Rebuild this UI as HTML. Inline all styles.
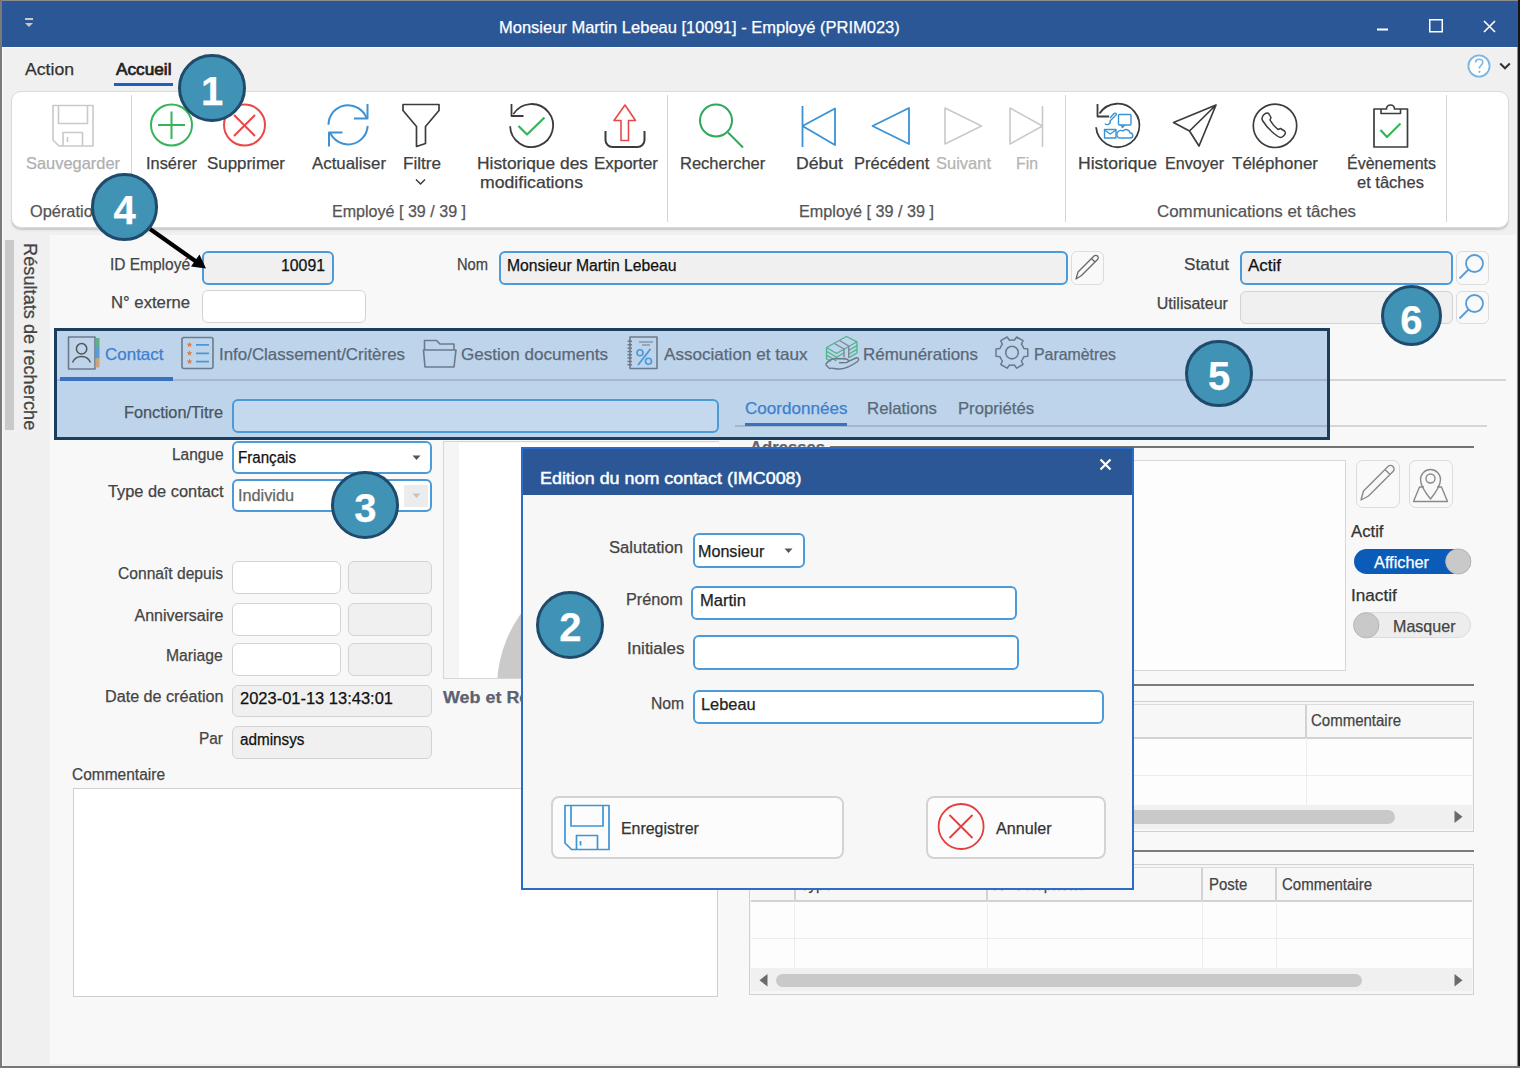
<!DOCTYPE html>
<html><head><meta charset="utf-8">
<style>
*{margin:0;padding:0;box-sizing:border-box}
html,body{width:1520px;height:1068px;overflow:hidden;background:#f0f0f0}
body{position:relative;font-family:"Liberation Sans",sans-serif;color:#3c3c3c}
.a{position:absolute}
.t{position:absolute;white-space:nowrap;line-height:1;-webkit-text-stroke-width:0.25px}
svg{position:absolute;overflow:visible}
</style></head><body>

<div class="a" style="left:0px;top:0px;width:1520px;height:1068px;background:#8c8c8c"></div>
<div class="a" style="left:2px;top:1px;width:1515px;height:1065px;background:#f0f0f0"></div>
<div class="a" style="left:2px;top:1px;width:1516px;height:46px;background:#2b5797"></div>
<div class="a" style="left:2px;top:47px;width:1515px;height:1px;background:#fafafa"></div>
<div class="t" style="left:499.00px;top:19.03px;font-size:16.5px;color:#fff;">Monsieur Martin Lebeau [10091] - Employé (PRIM023)</div>
<svg style="left:0;top:0" width="1520" height="1068" viewBox="0 0 1520 1068">
<rect x="1377" y="28.5" width="11" height="2" fill="#fff"/>
<rect x="1429.75" y="19.75" width="12.5" height="12" fill="none" stroke="#fff" stroke-width="1.5"/>
<path d="M1484 21L1495 32M1495 21L1484 32" stroke="#fff" stroke-width="1.6"/>
<rect x="25" y="18" width="8" height="2" fill="#c9c9c9"/>
<path d="M25 23L33 23L29 27Z" fill="#c9c9c9"/>
</svg>
<div class="t" style="left:25.00px;top:61.33px;font-size:16.5px;color:#333;transform:scaleX(1.0685);transform-origin:0 0;">Action</div>
<div class="t" style="left:116.00px;top:61.33px;font-size:16.5px;color:#222;transform:scaleX(1.0434);transform-origin:0 0;-webkit-text-stroke:0.7px #222;">Accueil</div>
<div class="a" style="left:114px;top:83px;width:59px;height:2.5px;background:#1b5fc6"></div>
<svg style="left:0;top:0" width="1520" height="1068" viewBox="0 0 1520 1068">
<circle cx="1479" cy="66" r="10.6" fill="#fff" stroke="#7ab6e2" stroke-width="1.8"/>
<path d="M1475.6 62.6C1475.6 60.4 1477.2 59.2 1479.2 59.2C1481.4 59.2 1482.8 60.6 1482.8 62.4C1482.8 64.8 1479.4 65.4 1479.4 68.6" fill="none" stroke="#7ab6e2" stroke-width="1.6"/>
<circle cx="1479.4" cy="71.8" r="1.1" fill="#7ab6e2"/>
<path d="M1500.2 63.5L1505 68.3L1509.8 63.5" fill="none" stroke="#333" stroke-width="2"/>
</svg>
<div class="a" style="left:11px;top:91px;width:1498px;height:137px;background:#fff;border:1px solid #dadada;border-radius:10px;box-shadow:0 2px 0 rgba(0,0,0,0.09),0 3px 2px rgba(0,0,0,0.05)"></div>
<div class="a" style="left:131px;top:95px;width:1px;height:127px;background:#d4d4d4"></div>
<div class="a" style="left:667px;top:95px;width:1px;height:127px;background:#d4d4d4"></div>
<div class="a" style="left:1065px;top:95px;width:1px;height:127px;background:#d4d4d4"></div>
<div class="a" style="left:1446px;top:95px;width:1px;height:127px;background:#d4d4d4"></div>
<svg style="left:0;top:0" width="1520" height="1068" viewBox="0 0 1520 1068">
<g fill="none" stroke-width="1.6" stroke-linejoin="round">
<path d="M53 105.5H93V146H59L53 140Z M58.5 105.5V123.5H87.5V105.5 M63 146V132.5H82.5V146 M67.5 137V142" stroke="#c9c9c9"/>
<circle cx="171.5" cy="125" r="20.5" stroke="#35b45a" stroke-width="2"/>
<path d="M158 125H185M171.5 111.5V139" stroke="#35b45a" stroke-width="2"/>
<circle cx="244.5" cy="125" r="20.5" stroke="#e94848" stroke-width="2"/>
<path d="M234 115L255 136M255 115L234 136" stroke="#e94848" stroke-width="2"/>
<path d="M328.50 124.80A19.6 19.6 0 0 1 366.52 118.10" stroke="#3a92d6" stroke-width="2"/>
<path d="M367.5 104V118.5H354" stroke="#3a92d6" stroke-width="2"/>
<path d="M367.67 125.83A19.6 19.6 0 0 1 329.93 132.14" stroke="#3a92d6" stroke-width="2"/>
<path d="M329 146.5V132.5H342.5" stroke="#3a92d6" stroke-width="2"/>
<path d="M403 104.5H439V110.5L425.5 126.5V143.5L416.5 146.5V126.5L403 110.5Z" stroke="#3c3c3c" stroke-width="1.7"/>
<path d="M416 179.5L420.5 184L425 179.5" stroke="#3c3c3c" stroke-width="1.5"/>
<path d="M510.11 126.25A21.5 21.5 0 1 0 513.37 114.11" stroke="#3c3c3c" stroke-width="1.8"/>
<path d="M511.5 104V116H523.5" stroke="#3c3c3c" stroke-width="1.8"/>
<path d="M518.5 126L527 134.5L544.5 117.5" stroke="#35b45a" stroke-width="2.2"/>
<path d="M625 105L614 120.5H621V140.5H628.5V120.5H635.5Z" stroke="#e94848" stroke-width="1.6"/>
<path d="M605.5 131V140A7 7 0 0 0 612.5 147H637.5A7 7 0 0 0 644.5 140V131" stroke="#3c3c3c" stroke-width="2"/>
<circle cx="716" cy="120.5" r="16" stroke="#2fa85a" stroke-width="2"/>
<path d="M728 132.5L743 147.5" stroke="#2fa85a" stroke-width="2"/>
<path d="M802.5 106V147M835 108.5V145L802.5 126Z" stroke="#3a92d6" stroke-width="1.8"/>
<path d="M909 108V144L872.5 126Z" stroke="#3a92d6" stroke-width="1.8"/>
<path d="M945 108V144L981.5 126Z" stroke="#c9c9c9" stroke-width="1.6"/>
<path d="M1010 108V144L1042.5 126Z M1042.5 106V147" stroke="#c9c9c9" stroke-width="1.6"/>
<path d="M1096.08 127.29A21.7 21.7 0 1 0 1099.50 113.58" stroke="#3c3c3c" stroke-width="1.8"/>
<path d="M1097.5 104V116.5H1109" stroke="#3c3c3c" stroke-width="1.8"/>
<g stroke="#3a92d6" stroke-width="1.4">
<rect x="1118.5" y="114.5" width="12.5" height="10.5" rx="1"/><path d="M1121 125L1122.5 127.5L1124.5 125"/>
<rect x="1104.5" y="129.5" width="11.5" height="8.5"/><path d="M1104.5 130L1110.25 134L1116 130"/>
<path d="M1119 138H1130.5A2.5 2.5 0 0 0 1130 133A4 4 0 0 0 1123 131A3.5 3.5 0 0 0 1119 138Z"/>
<path d="M1105 123.5A2.5 2 -30 1 0 1110 121L1116.5 114.5A1.5 1.5 0 0 0 1114 113.5L1110 118"/>
</g>
<path d="M1173.5 122.5L1216 105L1199 146L1189.5 131Z M1189.5 131L1216 105" stroke="#3c3c3c" stroke-width="1.7"/>
<circle cx="1275" cy="125.8" r="21.7" stroke="#3c3c3c" stroke-width="1.7"/>
<path d="M1264 114.5C1266 112.5 1268 112.5 1269 114L1271 117.5L1270 120C1272 123.5 1275 127 1278 129.5L1280.5 128.5L1284.5 131C1286 132.5 1285.5 134 1283.5 136C1282 137.5 1280 138 1278 136.5C1272 132.5 1266.5 127 1262.5 120.5C1261.5 118.5 1262.5 116 1264 114.5Z" stroke="#3c3c3c" stroke-width="1.5"/>
<path d="M1374 109H1386.5A4 4 0 0 1 1394.5 109H1407.5V147H1374Z" stroke="#3c3c3c" stroke-width="1.7"/>
<path d="M1381 109V113.5H1400.5V109" stroke="#3c3c3c" stroke-width="1.6"/>
<path d="M1380.5 130L1387 137L1400.5 123.5" stroke="#35b45a" stroke-width="2.2"/>
</g>
</svg>
<div class="t" style="left:26.00px;top:155.03px;font-size:16.5px;color:#b0b0b0;transform:scaleX(0.9949);transform-origin:0 0;">Sauvegarder</div>
<div class="t" style="left:146.00px;top:155.03px;font-size:16.5px;color:#404040;transform:scaleX(0.9931);transform-origin:0 0;">Insérer</div>
<div class="t" style="left:207.00px;top:155.03px;font-size:16.5px;color:#404040;transform:scaleX(1.0248);transform-origin:0 0;">Supprimer</div>
<div class="t" style="left:312.00px;top:155.03px;font-size:16.5px;color:#404040;transform:scaleX(1.0214);transform-origin:0 0;">Actualiser</div>
<div class="t" style="left:403.00px;top:155.03px;font-size:16.5px;color:#404040;transform:scaleX(1.0363);transform-origin:0 0;">Filtre</div>
<div class="t" style="left:477.00px;top:155.03px;font-size:16.5px;color:#404040;transform:scaleX(1.0524);transform-origin:0 0;">Historique des</div>
<div class="t" style="left:480.00px;top:174.03px;font-size:16.5px;color:#404040;transform:scaleX(1.0696);transform-origin:0 0;">modifications</div>
<div class="t" style="left:594.00px;top:155.03px;font-size:16.5px;color:#404040;transform:scaleX(1.0263);transform-origin:0 0;">Exporter</div>
<div class="t" style="left:680.00px;top:155.03px;font-size:16.5px;color:#404040;">Rechercher</div>
<div class="t" style="left:796.00px;top:155.03px;font-size:16.5px;color:#404040;transform:scaleX(1.0674);transform-origin:0 0;">Début</div>
<div class="t" style="left:854.00px;top:155.03px;font-size:16.5px;color:#404040;">Précédent</div>
<div class="t" style="left:936.00px;top:155.03px;font-size:16.5px;color:#b4b4b4;">Suivant</div>
<div class="t" style="left:1016.00px;top:155.03px;font-size:16.5px;color:#b4b4b4;transform:scaleX(0.9598);transform-origin:0 0;">Fin</div>
<div class="t" style="left:1078.00px;top:155.03px;font-size:16.5px;color:#404040;transform:scaleX(1.0635);transform-origin:0 0;">Historique</div>
<div class="t" style="left:1165.00px;top:155.03px;font-size:16.5px;color:#404040;transform:scaleX(0.9747);transform-origin:0 0;">Envoyer</div>
<div class="t" style="left:1232.00px;top:155.03px;font-size:16.5px;color:#404040;transform:scaleX(1.0302);transform-origin:0 0;">Téléphoner</div>
<div class="t" style="left:1347.00px;top:155.03px;font-size:16.5px;color:#404040;transform:scaleX(0.9704);transform-origin:0 0;">Évènements</div>
<div class="t" style="left:1357.00px;top:174.03px;font-size:16.5px;color:#404040;">et tâches</div>
<div class="t" style="left:30.00px;top:203.03px;font-size:16.5px;color:#555;transform:scaleX(0.9912);transform-origin:0 0;">Opérations</div>
<div class="t" style="left:332.00px;top:203.03px;font-size:16.5px;color:#555;transform:scaleX(0.9740);transform-origin:0 0;">Employé [ 39 / 39 ]</div>
<div class="t" style="left:799.00px;top:203.03px;font-size:16.5px;color:#555;transform:scaleX(0.9813);transform-origin:0 0;">Employé [ 39 / 39 ]</div>
<div class="t" style="left:1157.00px;top:203.03px;font-size:16.5px;color:#555;transform:scaleX(1.0235);transform-origin:0 0;">Communications et tâches</div>
<div class="a" style="left:50px;top:235px;width:1466px;height:829px;background:#f8f8f8"></div>
<div class="a" style="left:4.5px;top:240px;width:9px;height:190px;background:#c9c9c9"></div>
<div class="t" style="left:21px;top:243px;font-size:18px;color:#444;transform-origin:0 0;transform:translate(18px,0) rotate(90deg) scaleX(1.012)">Résultats de recherche</div>
<div class="a" style="left:1518px;top:0px;width:2px;height:1068px;background:#161616"></div>
<div class="a" style="left:0px;top:1066.3px;width:1520px;height:1.7px;background:#777"></div>
<div class="a" style="left:0px;top:0px;width:1.5px;height:1068px;background:#7a7a7a"></div>
<div class="a" style="left:1.5px;top:48px;width:1.5px;height:1018px;background:#fafafa"></div>
<div class="t" style="left:110.00px;top:257.46px;font-size:16px;color:#444;transform:scaleX(0.9674);transform-origin:0 0;">ID Employé</div>
<div class="a" style="left:202px;top:250.5px;width:132px;height:34.5px;background:#f0f0f0;border:2px solid #4d9ad8;border-radius:6px"></div>
<div class="t" style="left:281.30px;top:257.96px;font-size:16px;color:#111;transform:scaleX(0.9889);transform-origin:0 0;">10091</div>
<div class="t" style="left:456.50px;top:256.96px;font-size:16px;color:#444;transform:scaleX(0.9176);transform-origin:0 0;">Nom</div>
<div class="a" style="left:499px;top:250.5px;width:569px;height:34.5px;background:#f0f0f0;border:2px solid #4d9ad8;border-radius:6px"></div>
<div class="t" style="left:506.50px;top:257.96px;font-size:16px;color:#111;transform:scaleX(0.9824);transform-origin:0 0;">Monsieur Martin Lebeau</div>
<div class="a" style="left:1071px;top:250.5px;width:32.5px;height:34px;background:#f9f9f9;border:1.5px solid #dcdcdc;border-radius:6px"></div>
<div class="t" style="left:1183.50px;top:256.96px;font-size:16px;color:#444;transform:scaleX(1.0764);transform-origin:0 0;">Statut</div>
<div class="a" style="left:1239.5px;top:250.5px;width:213.5px;height:34px;background:#f0f0f0;border:2px solid #4d9ad8;border-radius:6px"></div>
<div class="t" style="left:1247.50px;top:257.96px;font-size:16px;color:#111;transform:scaleX(1.0605);transform-origin:0 0;">Actif</div>
<div class="a" style="left:1455.5px;top:250.5px;width:33px;height:34px;background:#f9f9f9;border:1.5px solid #dcdcdc;border-radius:6px"></div>
<div class="t" style="left:111.00px;top:295.46px;font-size:16px;color:#444;transform:scaleX(1.0427);transform-origin:0 0;">N° externe</div>
<div class="a" style="left:202px;top:289.5px;width:164px;height:33.5px;background:#fff;border:1.5px solid #d3d3d3;border-radius:6px"></div>
<div class="t" style="left:1156.80px;top:296.06px;font-size:16px;color:#444;">Utilisateur</div>
<div class="a" style="left:1239.5px;top:291.3px;width:213px;height:32.7px;background:#f0f0f0;border:1.5px solid #d3d3d3;border-radius:6px"></div>
<div class="a" style="left:1455.5px;top:291.3px;width:33px;height:32.7px;background:#f9f9f9;border:1.5px solid #dcdcdc;border-radius:6px"></div>
<svg style="left:0;top:0" width="1520" height="1068" viewBox="0 0 1520 1068">
<g fill="none" stroke-linejoin="round">
<path d="M1076 279L1078 272L1094 256A1.8 1.8 0 0 1 1097.5 259.5L1081.5 275.5Z M1076 279L1081.5 275.5 M1091.5 258.5L1095 262" stroke="#666" stroke-width="1.3"/>
<circle cx="1474.5" cy="263.5" r="8.5" stroke="#5b9bd5" stroke-width="1.8"/>
<path d="M1468.5 269.5L1459.5 278.5" stroke="#5b9bd5" stroke-width="1.8"/>
<circle cx="1474.5" cy="303.5" r="8.5" stroke="#5b9bd5" stroke-width="1.8"/>
<path d="M1468.5 309.5L1459.5 318.5" stroke="#5b9bd5" stroke-width="1.8"/>
</g></svg>
<div class="a" style="left:1329px;top:379.2px;width:177px;height:2px;background:#d6d6d6"></div>
<div class="a" style="left:1329px;top:425.3px;width:158px;height:2px;background:#d6d6d6"></div>
<div class="t" style="left:749.50px;top:438.53px;font-size:16.5px;color:#5e6670;font-weight:bold;transform:scaleX(1.0094);transform-origin:0 0;">Adresses</div>
<div class="a" style="left:830px;top:446px;width:644px;height:2.2px;background:#727272"></div>
<div class="a" style="left:54px;top:328px;width:1276px;height:111.5px;background:#bdd4ea;border:3.2px solid #1b3d5e"></div>
<div class="a" style="left:57px;top:379.2px;width:1270px;height:2px;background:#a3b8cc"></div>
<div class="a" style="left:60px;top:376.6px;width:112.5px;height:4.2px;background:#3a70c0"></div>
<div class="t" style="left:105.00px;top:346.03px;font-size:16.5px;color:#3d7fd0;transform:scaleX(1.0288);transform-origin:0 0;">Contact</div>
<div class="t" style="left:219.00px;top:346.03px;font-size:16.5px;color:#5a6878;transform:scaleX(1.0244);transform-origin:0 0;">Info/Classement/Critères</div>
<div class="t" style="left:461.00px;top:346.03px;font-size:16.5px;color:#5a6878;transform:scaleX(1.0340);transform-origin:0 0;">Gestion documents</div>
<div class="t" style="left:664.00px;top:346.03px;font-size:16.5px;color:#5a6878;transform:scaleX(1.0361);transform-origin:0 0;">Association et taux</div>
<div class="t" style="left:862.50px;top:346.03px;font-size:16.5px;color:#5a6878;transform:scaleX(1.0278);transform-origin:0 0;">Rémunérations</div>
<div class="t" style="left:1033.50px;top:346.03px;font-size:16.5px;color:#5a6878;transform:scaleX(0.9615);transform-origin:0 0;">Paramètres</div>
<div class="t" style="left:124.00px;top:405.26px;font-size:16px;color:#4a5560;transform:scaleX(1.0183);transform-origin:0 0;">Fonction/Titre</div>
<div class="a" style="left:231.6px;top:399px;width:487.6px;height:33.5px;background:#c4d9ee;border:2px solid #4d9ad8;border-radius:6px"></div>
<div class="t" style="left:744.80px;top:400.23px;font-size:16.5px;color:#3d7fd0;transform:scaleX(1.0346);transform-origin:0 0;">Coordonnées</div>
<div class="t" style="left:867.20px;top:400.23px;font-size:16.5px;color:#5a6878;transform:scaleX(1.0176);transform-origin:0 0;">Relations</div>
<div class="t" style="left:957.80px;top:400.23px;font-size:16.5px;color:#5a6878;transform:scaleX(1.0106);transform-origin:0 0;">Propriétés</div>
<div class="a" style="left:735px;top:425.3px;width:592px;height:2px;background:#a3b8cc"></div>
<div class="a" style="left:744.8px;top:422.7px;width:102.7px;height:3.8px;background:#3a70c0"></div>
<svg style="left:0;top:0" width="1520" height="1068" viewBox="0 0 1520 1068">
<g fill="none" stroke-linejoin="round">
<rect x="68.5" y="337" width="26.5" height="32" stroke="#6b7b8c" stroke-width="1.6"/>
<rect x="95.5" y="338" width="4" height="10" fill="#5fb08a" stroke="none"/>
<rect x="95.5" y="348" width="4" height="10" fill="#5a9ad8" stroke="none"/>
<rect x="95.5" y="358" width="4" height="9.5" fill="#c9a67a" stroke="none"/>
<circle cx="81.6" cy="348.8" r="5.2" stroke="#555" stroke-width="1.5"/>
<path d="M72.5 362.5A9.5 9 0 0 1 90.5 362.5" stroke="#555" stroke-width="1.5"/>
<rect x="182" y="337.5" width="31" height="31" rx="2" stroke="#6b7b8c" stroke-width="1.6"/>
<path d="M196 344.8H209M196 353.3H209M196 361.6H209" stroke="#4a98d8" stroke-width="1.8"/>
<g fill="#d9804a" stroke="none"><polygon points="189.50,341.80 190.26,343.75 192.35,343.87 190.74,345.20 191.26,347.23 189.50,346.10 187.74,347.23 188.26,345.20 186.65,343.87 188.74,343.75"/><polygon points="189.50,350.30 190.26,352.25 192.35,352.37 190.74,353.70 191.26,355.73 189.50,354.60 187.74,355.73 188.26,353.70 186.65,352.37 188.74,352.25"/><polygon points="189.50,358.60 190.26,360.55 192.35,360.67 190.74,362.00 191.26,364.03 189.50,362.90 187.74,364.03 188.26,362.00 186.65,360.67 188.74,360.55"/></g>
<path d="M424.5 350V340.5H436.5L440 344H454V350 M423.5 350H456L454 367H425Z" stroke="#6b7b8c" stroke-width="1.6"/>
<rect x="630" y="337" width="27" height="31.5" stroke="#6b7b8c" stroke-width="1.6"/>
<path d="M627.5 341.2H632M627.5 344.7H632M627.5 348.2H632M627.5 351.5H632M627.5 354.8H632M627.5 358.1H632M627.5 361.4H632M627.5 364.7H632" stroke="#6b7b8c" stroke-width="1.5"/>
<path d="M639 342H653M642 345H650" stroke="#6b7b8c" stroke-width="1.2"/>
<path d="M650.5 349L638 365" stroke="#4a98d8" stroke-width="1.8"/>
<circle cx="640" cy="352.8" r="3" stroke="#4a98d8" stroke-width="1.6"/>
<circle cx="648.5" cy="361.3" r="3" stroke="#4a98d8" stroke-width="1.6"/>
<path d="M826.5 347.5L846.5 336.5L857 341.8L836.5 353.5Z M826.5 351.3L836.5 357.3L844 353 M826.5 355.1L836.5 361 M826.5 358.9L831 361.5 M826.5 347.5V358.9 M857 341.8V353 M857 345.6L848.5 350.5 M857 349.4L848.5 354.3 M857 353L848.5 357.9" stroke="#4fb48a" stroke-width="1.3"/>
<path d="M834.5 343.5L844 349V357.5 M839.5 340.5L848.7 346V357.5" stroke="#7a8898" stroke-width="1.4"/>
<path d="M825.5 364.5C828 361 832 358.5 836 358.5L846.5 359C849 359.5 849 362.3 846.5 362.5L839 362.8 M848.5 361.3L856 358C858.7 357 859.5 360 857.5 361.5C852 365.5 846 368.7 840 369C835 369.3 832 367.3 829.5 368.5L825.5 364.5" stroke="#6a7888" stroke-width="1.4"/>
<path d="M1023.81 348.50L1027.78 348.93L1027.78 356.27L1023.81 356.70A12.6 12.6 0 0 1 1021.41 360.87L1023.02 364.52L1016.67 368.19L1014.30 364.97A12.6 12.6 0 0 1 1009.50 364.97L1007.13 368.19L1000.78 364.52L1002.39 360.87A12.6 12.6 0 0 1 999.99 356.70L996.02 356.27L996.02 348.93L999.99 348.50A12.6 12.6 0 0 1 1002.39 344.33L1000.78 340.68L1007.13 337.01L1009.50 340.23A12.6 12.6 0 0 1 1014.30 340.23L1016.67 337.01L1023.02 340.68L1021.41 344.33A12.6 12.6 0 0 1 1023.81 348.50Z" stroke="#6b7b8c" stroke-width="1.5"/>
<circle cx="1012" cy="352.6" r="6.3" stroke="#6b7b8c" stroke-width="1.6"/>
</g></svg>
<div class="t" style="left:171.50px;top:446.76px;font-size:16px;color:#444;transform:scaleX(0.9646);transform-origin:0 0;">Langue</div>
<div class="a" style="left:232px;top:441px;width:200px;height:33.3px;background:#fff;border:2px solid #4d9ad8;border-radius:6px"></div>
<div class="t" style="left:237.50px;top:449.96px;font-size:16px;color:#111;transform:scaleX(0.9453);transform-origin:0 0;">Français</div>
<div class="t" style="left:108.00px;top:483.76px;font-size:16px;color:#444;transform:scaleX(1.0225);transform-origin:0 0;">Type de contact</div>
<div class="a" style="left:232px;top:479.3px;width:200px;height:33px;background:#fff;border:2px solid #4d9ad8;border-radius:6px"></div>
<div class="a" style="left:404px;top:485px;width:24px;height:22px;background:#ececec"></div>
<div class="t" style="left:237.50px;top:488.46px;font-size:16px;color:#666;transform:scaleX(1.0154);transform-origin:0 0;">Individu</div>
<svg style="left:0;top:0" width="1520" height="1068" viewBox="0 0 1520 1068"><path d="M412.5 455.5H420.5L416.5 460Z" fill="#555"/><path d="M412.5 493.5H420.5L416.5 498Z" fill="#c4c4c4"/></svg>
<div class="t" style="left:118.00px;top:566.46px;font-size:16px;color:#444;transform:scaleX(0.9755);transform-origin:0 0;">Connaît depuis</div>
<div class="a" style="left:232px;top:561.3px;width:108.5px;height:33.200000000000045px;background:#fff;border:1.5px solid #d3d3d3;border-radius:6px"></div>
<div class="a" style="left:347.5px;top:561.3px;width:84.3px;height:33.200000000000045px;background:#f0f0f0;border:1.5px solid #d3d3d3;border-radius:6px"></div>
<div class="t" style="left:134.50px;top:608.46px;font-size:16px;color:#444;">Anniversaire</div>
<div class="a" style="left:232px;top:602.5px;width:108.5px;height:33.799999999999955px;background:#fff;border:1.5px solid #d3d3d3;border-radius:6px"></div>
<div class="a" style="left:347.5px;top:602.5px;width:84.3px;height:33.799999999999955px;background:#f0f0f0;border:1.5px solid #d3d3d3;border-radius:6px"></div>
<div class="t" style="left:166.30px;top:647.76px;font-size:16px;color:#444;transform:scaleX(0.9808);transform-origin:0 0;">Mariage</div>
<div class="a" style="left:232px;top:643px;width:108.5px;height:32.799999999999955px;background:#fff;border:1.5px solid #d3d3d3;border-radius:6px"></div>
<div class="a" style="left:347.5px;top:643px;width:84.3px;height:32.799999999999955px;background:#f0f0f0;border:1.5px solid #d3d3d3;border-radius:6px"></div>
<div class="t" style="left:104.50px;top:689.46px;font-size:16px;color:#444;transform:scaleX(1.0093);transform-origin:0 0;">Date de création</div>
<div class="a" style="left:232px;top:684.5px;width:200px;height:32.5px;background:#f0f0f0;border:1.5px solid #d3d3d3;border-radius:6px"></div>
<div class="t" style="left:240.00px;top:690.96px;font-size:16px;color:#111;transform:scaleX(1.0298);transform-origin:0 0;">2023-01-13 13:43:01</div>
<div class="t" style="left:199.00px;top:730.96px;font-size:16px;color:#444;transform:scaleX(0.9639);transform-origin:0 0;">Par</div>
<div class="a" style="left:232px;top:726.3px;width:200px;height:32.5px;background:#f0f0f0;border:1.5px solid #d3d3d3;border-radius:6px"></div>
<div class="t" style="left:240.00px;top:732.46px;font-size:16px;color:#111;transform:scaleX(0.9544);transform-origin:0 0;">adminsys</div>
<div class="t" style="left:72.30px;top:766.66px;font-size:16px;color:#444;transform:scaleX(0.9684);transform-origin:0 0;">Commentaire</div>
<div class="a" style="left:72.5px;top:788px;width:645.5px;height:208.5px;background:#fff;border:1.5px solid #cfcfcf"></div>
<div class="a" style="left:442.8px;top:441.3px;width:276px;height:237.5px;background:#f5f5f5;border:1.5px solid #d6d6d6;border-right:none"></div>
<div class="a" style="left:459px;top:443px;width:260px;height:235px;background:#fff;overflow:hidden"><div class="a" style="left:38.0px;top:117.0px;width:256px;height:256px;border-radius:50%;background:#cacaca"></div></div>
<div class="t" style="left:443.00px;top:689.03px;font-size:16.5px;color:#5a6270;font-weight:bold;transform:scaleX(1.0860);transform-origin:0 0;">Web et Réseaux sociaux</div>
<div class="a" style="left:749px;top:460.3px;width:597px;height:211px;background:#fdfdfd;border:1.5px solid #d6d6d6"></div>
<div class="a" style="left:1355.5px;top:460.3px;width:44px;height:48.2px;background:#f9f9f9;border:1.5px solid #dcdcdc;border-radius:7px"></div>
<div class="a" style="left:1408.8px;top:460.3px;width:44px;height:48.2px;background:#f9f9f9;border:1.5px solid #dcdcdc;border-radius:7px"></div>
<svg style="left:0;top:0" width="1520" height="1068" viewBox="0 0 1520 1068"><g fill="none" stroke="#8a8a8a" stroke-width="1.4" stroke-linejoin="round">
<path d="M1361 500L1363.5 491L1388 466.5A2.5 2.5 0 0 1 1393 471.5L1368.5 496Z M1361 500L1368.5 496 M1385 469.5L1390 474.5"/>
<path d="M1430.5 499C1424 491 1420.5 485.5 1420.5 479.5A10 10 0 0 1 1440.5 479.5C1440.5 485.5 1437 491 1430.5 499Z"/>
<circle cx="1430.5" cy="478.5" r="4.5"/>
<path d="M1424 487H1419.5L1413.5 501.5H1447.5L1441.5 487H1437"/>
</g></svg>
<div class="t" style="left:1350.50px;top:524.46px;font-size:16px;color:#333;transform:scaleX(1.0444);transform-origin:0 0;">Actif</div>
<div class="a" style="left:1353.8px;top:549px;width:117.5px;height:25px;background:#0a5cb8;border-radius:13px"></div>
<div class="t" style="left:1373.80px;top:553.83px;font-size:16.5px;color:#fff;transform:scaleX(0.9885);transform-origin:0 0;">Afficher</div>
<svg style="left:0;top:0" width="1520" height="1068" viewBox="0 0 1520 1068"><circle cx="1458.3" cy="561.5" r="12.6" fill="#c9c9c9" stroke="#b8b8b8" stroke-width="1"/></svg>
<div class="t" style="left:1350.50px;top:587.96px;font-size:16px;color:#333;transform:scaleX(1.0729);transform-origin:0 0;">Inactif</div>
<div class="a" style="left:1353px;top:612.3px;width:118.3px;height:25.7px;background:#ededed;border:1px solid #dcdcdc;border-radius:13px"></div>
<svg style="left:0;top:0" width="1520" height="1068" viewBox="0 0 1520 1068"><circle cx="1366.3" cy="625.3" r="12.6" fill="#c9c9c9" stroke="#b8b8b8" stroke-width="1"/></svg>
<div class="t" style="left:1392.50px;top:618.33px;font-size:16.5px;color:#444;transform:scaleX(0.9736);transform-origin:0 0;">Masquer</div>
<div class="a" style="left:749px;top:684px;width:725px;height:1.6px;background:#7a7a7a"></div>
<div class="a" style="left:749px;top:850px;width:725px;height:1.6px;background:#7a7a7a"></div>
<div class="a" style="left:749px;top:700.5px;width:724.5px;height:131.29999999999995px;background:#f6f6f6;border:1.5px solid #d0d0d0"></div>
<div class="a" style="left:751px;top:703.5px;width:720.5px;height:34.0px;background:#f7f7f7;border-top:1.5px solid #dcdcdc"></div>
<div class="a" style="left:751px;top:737.5px;width:720.5px;height:67.0px;background:#fdfdfd"></div>
<div class="a" style="left:751px;top:736.5px;width:720.5px;height:2px;background:#d2d2d2"></div>
<div class="a" style="left:751px;top:775px;width:720.5px;height:1px;background:#ececec"></div>
<div class="a" style="left:1305.3px;top:704.5px;width:2px;height:33.0px;background:#d2d2d2"></div>
<div class="a" style="left:1305.8px;top:737.5px;width:1px;height:67.0px;background:#ececec"></div>
<div class="a" style="left:751px;top:804.5px;width:720.5px;height:24.299999999999955px;background:#f0f0f0"></div>
<div class="a" style="left:777px;top:810.0px;width:618px;height:13.5px;background:#c9c9c9;border-radius:7px"></div>
<svg style="left:0;top:0" width="1520" height="1068" viewBox="0 0 1520 1068"><path d="M767.5 810.5V823.0L759.5 816.75Z" fill="#6a6a6a"/></svg>
<svg style="left:0;top:0" width="1520" height="1068" viewBox="0 0 1520 1068"><path d="M1454.5 810.5V823.0L1462.5 816.75Z" fill="#6a6a6a"/></svg>
<div class="t" style="left:1311.30px;top:713.46px;font-size:16px;color:#444;transform:scaleX(0.9372);transform-origin:0 0;">Commentaire</div>
<div class="a" style="left:749px;top:863.8px;width:724.5px;height:131.20000000000005px;background:#f6f6f6;border:1.5px solid #d0d0d0"></div>
<div class="a" style="left:751px;top:866.8px;width:720.5px;height:34.0px;background:#f7f7f7;border-top:1.5px solid #dcdcdc"></div>
<div class="a" style="left:751px;top:900.8px;width:720.5px;height:67.20000000000005px;background:#fdfdfd"></div>
<div class="a" style="left:751px;top:899.8px;width:720.5px;height:2px;background:#d2d2d2"></div>
<div class="a" style="left:751px;top:938px;width:720.5px;height:1px;background:#ececec"></div>
<div class="a" style="left:793.5px;top:867.8px;width:2px;height:33.0px;background:#d2d2d2"></div>
<div class="a" style="left:794.0px;top:900.8px;width:1px;height:67.20000000000005px;background:#ececec"></div>
<div class="a" style="left:986px;top:867.8px;width:2px;height:33.0px;background:#d2d2d2"></div>
<div class="a" style="left:986.5px;top:900.8px;width:1px;height:67.20000000000005px;background:#ececec"></div>
<div class="a" style="left:1201px;top:867.8px;width:2px;height:33.0px;background:#d2d2d2"></div>
<div class="a" style="left:1201.5px;top:900.8px;width:1px;height:67.20000000000005px;background:#ececec"></div>
<div class="a" style="left:1275.3px;top:867.8px;width:2px;height:33.0px;background:#d2d2d2"></div>
<div class="a" style="left:1275.8px;top:900.8px;width:1px;height:67.20000000000005px;background:#ececec"></div>
<div class="a" style="left:751px;top:968px;width:720.5px;height:23.299999999999955px;background:#f0f0f0"></div>
<div class="a" style="left:776.3px;top:973.5px;width:585.7px;height:13.5px;background:#c9c9c9;border-radius:7px"></div>
<svg style="left:0;top:0" width="1520" height="1068" viewBox="0 0 1520 1068"><path d="M767.5 974V986.5L759.5 980.25Z" fill="#6a6a6a"/></svg>
<svg style="left:0;top:0" width="1520" height="1068" viewBox="0 0 1520 1068"><path d="M1454.5 974V986.5L1462.5 980.25Z" fill="#6a6a6a"/></svg>
<div class="t" style="left:800.00px;top:876.76px;font-size:16px;color:#444;transform:scaleX(0.9513);transform-origin:0 0;">Type</div>
<div class="t" style="left:993.00px;top:876.76px;font-size:16px;color:#444;transform:scaleX(0.9516);transform-origin:0 0;">N° Téléphone</div>
<div class="t" style="left:1208.80px;top:876.76px;font-size:16px;color:#444;transform:scaleX(0.9336);transform-origin:0 0;">Poste</div>
<div class="t" style="left:1281.80px;top:876.76px;font-size:16px;color:#444;transform:scaleX(0.9372);transform-origin:0 0;">Commentaire</div>
<div class="a" style="left:520.9px;top:446.7px;width:613.5px;height:443px;background:#f7f7f7;border:2px solid #2a6cc8"></div>
<div class="a" style="left:522.9px;top:448.7px;width:609.5px;height:46.5px;background:#2b5797"></div>
<div class="t" style="left:540.30px;top:469.63px;font-size:16.5px;color:#fff;transform:scaleX(1.0841);transform-origin:0 0;-webkit-text-stroke:0.45px #fff;">Edition du nom contact (IMC008)</div>
<svg style="left:0;top:0" width="1520" height="1068" viewBox="0 0 1520 1068"><path d="M1100.5 459.5L1110.5 469.5M1110.5 459.5L1100.5 469.5" stroke="#fff" stroke-width="2.2"/></svg>
<div class="t" style="left:609.40px;top:540.16px;font-size:16px;color:#444;transform:scaleX(1.0398);transform-origin:0 0;">Salutation</div>
<div class="a" style="left:692.9px;top:533.3px;width:112.2px;height:35.1px;background:#fff;border:2px solid #4d9ad8;border-radius:6px"></div>
<div class="t" style="left:698.20px;top:544.36px;font-size:16px;color:#222;transform:scaleX(1.0075);transform-origin:0 0;">Monsieur</div>
<svg style="left:0;top:0" width="1520" height="1068" viewBox="0 0 1520 1068"><path d="M784.5 548.5H792.5L788.5 553Z" fill="#555"/></svg>
<div class="t" style="left:625.60px;top:591.66px;font-size:16px;color:#444;transform:scaleX(1.0138);transform-origin:0 0;">Prénom</div>
<div class="a" style="left:691.3px;top:585.7px;width:325.4px;height:34.4px;background:#fff;border:2px solid #4d9ad8;border-radius:6px"></div>
<div class="t" style="left:699.50px;top:593.46px;font-size:16px;color:#222;transform:scaleX(1.0348);transform-origin:0 0;">Martin</div>
<div class="t" style="left:626.60px;top:641.46px;font-size:16px;color:#444;transform:scaleX(1.0580);transform-origin:0 0;">Initiales</div>
<div class="a" style="left:693px;top:635.4px;width:325.5px;height:34.4px;background:#fff;border:2px solid #4d9ad8;border-radius:6px"></div>
<div class="t" style="left:650.80px;top:696.46px;font-size:16px;color:#444;transform:scaleX(0.9828);transform-origin:0 0;">Nom</div>
<div class="a" style="left:693px;top:689.7px;width:411.4px;height:34.5px;background:#fff;border:2px solid #4d9ad8;border-radius:6px"></div>
<div class="t" style="left:700.50px;top:697.46px;font-size:16px;color:#222;transform:scaleX(1.0245);transform-origin:0 0;">Lebeau</div>
<div class="a" style="left:551.2px;top:796.4px;width:292.8px;height:62.6px;background:#fcfcfc;border:2px solid #d3d3d3;border-radius:8px"></div>
<div class="a" style="left:926.2px;top:796.4px;width:180.1px;height:62.6px;background:#fcfcfc;border:2px solid #d3d3d3;border-radius:8px"></div>
<svg style="left:0;top:0" width="1520" height="1068" viewBox="0 0 1520 1068"><g fill="none" stroke-linejoin="round">
<path d="M565 805.5H609V849.5H571.5L565 843Z M571 805.5V826H603V805.5 M576.5 849.5V835.5H597.5V849.5 M580.5 841V845.5" stroke="#3b95d6" stroke-width="1.7"/>
<circle cx="961.1" cy="826.5" r="22.5" stroke="#e43d3d" stroke-width="1.8"/>
<path d="M949.5 815L972.5 838M972.5 815L949.5 838" stroke="#e43d3d" stroke-width="1.8"/>
</g></svg>
<div class="t" style="left:621.00px;top:821.16px;font-size:16px;color:#333;transform:scaleX(0.9942);transform-origin:0 0;">Enregistrer</div>
<div class="t" style="left:996.00px;top:821.16px;font-size:16px;color:#333;transform:scaleX(1.0081);transform-origin:0 0;">Annuler</div>
<svg style="left:0;top:0" width="1520" height="1068" viewBox="0 0 1520 1068"><path d="M150 229L196 261.5" stroke="#000" stroke-width="4.2"/><path d="M206 268.5L191 266.5L199.5 254.5Z" fill="#000"/></svg>
<div class="a" style="left:178.2px;top:54.1px;width:67.8px;height:67.8px;border-radius:50%;background:#4093b5;border:3.6px solid #1f4a6b"></div>
<div class="t" style="left:200.98px;top:70.64px;font-size:40px;color:#fff;font-weight:bold;">1</div>
<div class="a" style="left:536.3px;top:590.9px;width:68px;height:68px;border-radius:50%;background:#4093b5;border:3.6px solid #1f4a6b"></div>
<div class="t" style="left:559.18px;top:606.94px;font-size:40px;color:#fff;font-weight:bold;">2</div>
<div class="a" style="left:331.4px;top:471.4px;width:67.8px;height:67.8px;border-radius:50%;background:#4093b5;border:3.6px solid #1f4a6b"></div>
<div class="t" style="left:354.18px;top:487.94px;font-size:40px;color:#fff;font-weight:bold;">3</div>
<div class="a" style="left:90.9px;top:173.3px;width:67.6px;height:67.6px;border-radius:50%;background:#4093b5;border:3.6px solid #1f4a6b"></div>
<div class="t" style="left:113.58px;top:189.74px;font-size:40px;color:#fff;font-weight:bold;">4</div>
<div class="a" style="left:1185.2px;top:339.8px;width:67.6px;height:67.6px;border-radius:50%;background:#4093b5;border:3.6px solid #1f4a6b"></div>
<div class="t" style="left:1207.88px;top:356.24px;font-size:40px;color:#fff;font-weight:bold;">5</div>
<div class="a" style="left:1380.6px;top:284.8px;width:61.6px;height:61.6px;border-radius:50%;background:#4093b5;border:3.6px solid #1f4a6b"></div>
<div class="t" style="left:1400.28px;top:300.14px;font-size:40px;color:#fff;font-weight:bold;">6</div>
</body></html>
